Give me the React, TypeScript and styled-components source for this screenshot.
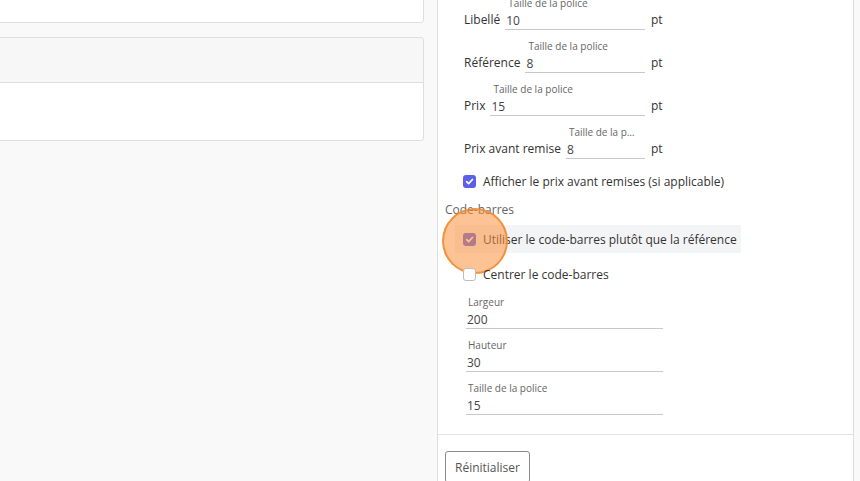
import React, { useState } from "react";
import styled, { createGlobalStyle } from "styled-components";

const GlobalStyle = createGlobalStyle`
  html, body {
    margin: 0;
    padding: 0;
    background: #f9f9f9;
  }
  body {
    font-family: "Open Sans", "Noto Sans", sans-serif;
    color: #333;
    overflow: hidden;
  }
`;

const champsPolice = [
  { libelle: "Libellé", valeur: "10" },
  { libelle: "Référence", valeur: "8" },
  { libelle: "Prix", valeur: "15" },
  { libelle: "Prix avant remise", valeur: "8" },
];

const champsCodeBarres = [
  { libelle: "Largeur", valeur: "200" },
  { libelle: "Hauteur", valeur: "30" },
  { libelle: "Taille de la police", valeur: "15" },
];

const Check = ({ coche }: { coche: boolean }) => (
  <Case $coche={coche}>
    {coche && (
      <svg width="9" height="9" viewBox="0 0 10 10">
        <path d="M1.8 5.2 L4 7.3 L8.3 2.8" fill="none" stroke="#fff" strokeWidth="1.9" strokeLinecap="round" strokeLinejoin="round" />
      </svg>
    )}
  </Case>
);

const App = () => {
  const [prixAvant, setPrixAvant] = useState<boolean>(true);
  const [utiliserCode, setUtiliserCode] = useState<boolean>(true);
  const [centrer, setCentrer] = useState<boolean>(false);

  return (
    <>
      <GlobalStyle />
      <Page>
        <ColonneGauche>
          <Carte $coupee>
            <CorpsCarte $hauteur={22} />
          </Carte>
          <Carte>
            <EnteteCarte />
            <CorpsCarte $hauteur={57} />
          </Carte>
        </ColonneGauche>

        <Panneau>
          <ContenuPanneau>
            {champsPolice.map((c) => (
              <LigneChamp key={c.libelle}>
                <Libelle>{c.libelle}</Libelle>
                <ZoneSaisie>
                  <PetitLibelle>Taille de la police</PetitLibelle>
                  <Saisie defaultValue={c.valeur} />
                </ZoneSaisie>
                <Unite>pt</Unite>
              </LigneChamp>
            ))}

            <LigneCase $espace={8} onClick={() => setPrixAvant(!prixAvant)}>
              <Check coche={prixAvant} />
              <TexteCase>Afficher le prix avant remises (si applicable)</TexteCase>
            </LigneCase>

            <TitreSection>Code-barres</TitreSection>

            <LigneCase $survol onClick={() => setUtiliserCode(!utiliserCode)}>
              <Check coche={utiliserCode} />
              <TexteCase>Utiliser le code-barres plutôt que la référence</TexteCase>
              <IndicateurClic />
            </LigneCase>

            <LigneCase $espace={7} onClick={() => setCentrer(!centrer)}>
              <Check coche={centrer} />
              <TexteCase>Centrer le code-barres</TexteCase>
            </LigneCase>

            <GroupeChamps>
              {champsCodeBarres.map((c) => (
                <ChampEmpile key={c.libelle}>
                  <PetitLibelle $decale>{c.libelle}</PetitLibelle>
                  <Saisie defaultValue={c.valeur} />
                </ChampEmpile>
              ))}
            </GroupeChamps>
          </ContenuPanneau>

          <PiedPanneau>
            <Bouton type="button">Réinitialiser</Bouton>
          </PiedPanneau>
        </Panneau>
        <Gouttiere />
      </Page>
    </>
  );
};

export default App;

const Page = styled.div`
  display: flex;
  height: 481px;
  width: 860px;
  overflow: hidden;
  background: #f9f9f9;
`;

const ColonneGauche = styled.div`
  width: 437px;
  padding-right: 13px;
  box-sizing: border-box;
  display: flex;
  flex-direction: column;
  gap: 14px;
`;

const Carte = styled.div<{ $coupee?: boolean }>`
  background: #fff;
  border: 1px solid #dedede;
  border-left: none;
  border-top: ${(p) => (p.$coupee ? "none" : "1px solid #dedede")};
  border-radius: ${(p) => (p.$coupee ? "0 0 4px 0" : "0 4px 4px 0")};
  overflow: hidden;
`;

const EnteteCarte = styled.div`
  height: 44px;
  background: #f7f7f7;
  border-bottom: 1px solid #dedede;
`;

const CorpsCarte = styled.div<{ $hauteur: number }>`
  height: ${(p) => p.$hauteur}px;
  background: #fff;
`;

const Panneau = styled.div`
  width: 417px;
  box-sizing: border-box;
  background: #fff;
  border-left: 1px solid #dedede;
  border-right: 1px solid #dedede;
  display: flex;
  flex-direction: column;
`;

const Gouttiere = styled.div`
  flex: 1;
  background: #f9f9f9;
`;

const ContenuPanneau = styled.div`
  margin-top: -13px;
  padding: 0 0 19px 7px;
  border-bottom: 1px solid #e2e2e2;
  display: flex;
  flex-direction: column;
  align-items: flex-start;
`;

const LigneChamp = styled.div`
  display: flex;
  align-items: flex-end;
  width: 200px;
  height: 43px;
  margin-left: 19px;
  font-size: 12px;
`;

const Libelle = styled.span`
  line-height: 20px;
  margin-right: 5px;
  white-space: nowrap;
  color: #333;
`;

const ZoneSaisie = styled.div`
  flex: 1;
  min-width: 0;
  display: flex;
  flex-direction: column;
`;

const PetitLibelle = styled.span<{ $decale?: boolean }>`
  font-size: 10px;
  line-height: 14px;
  color: #666;
  padding: ${(p) => (p.$decale ? "0 0 0 2px" : "0 6px 0 3px")};
  white-space: nowrap;
  overflow: hidden;
  text-overflow: ellipsis;
`;

const Saisie = styled.input`
  width: 100%;
  height: 20px;
  box-sizing: border-box;
  border: none;
  border-bottom: 1px solid #c9c9c9;
  padding: 2px 1px 0;
  font-family: inherit;
  font-size: 12px;
  color: #444;
  background: transparent;
  outline: none;
`;

const Unite = styled.span`
  width: 13px;
  margin-left: 6px;
  line-height: 20px;
  color: #333;
`;

const LigneCase = styled.div<{ $survol?: boolean; $espace?: number }>`
  position: relative;
  display: inline-flex;
  align-items: center;
  height: 28px;
  margin-top: ${(p) => p.$espace ?? 0}px;
  margin-left: 10px;
  padding: 0 4px 0 8px;
  background: ${(p) => (p.$survol ? "#f3f4f6" : "transparent")};
  cursor: pointer;
`;

const Case = styled.span<{ $coche: boolean }>`
  width: 13px;
  height: 13px;
  box-sizing: border-box;
  border-radius: 3px;
  display: inline-flex;
  align-items: center;
  justify-content: center;
  background: ${(p) => (p.$coche ? "#5c5fe8" : "#fff")};
  border: ${(p) => (p.$coche ? "none" : "1px solid #bdbdbd")};
  flex-shrink: 0;
`;

const TexteCase = styled.span`
  margin-left: 7px;
  font-size: 12px;
  color: #333;
  white-space: nowrap;
`;

const TitreSection = styled.div`
  height: 30px;
  line-height: 30px;
  font-size: 12px;
  color: #666;
`;

const IndicateurClic = styled.span`
  position: absolute;
  left: -13px;
  top: -17px;
  width: 66px;
  height: 66px;
  box-sizing: border-box;
  border-radius: 50%;
  background: rgba(252, 145, 60, 0.55);
  border: 2px solid rgba(240, 140, 50, 0.9);
  pointer-events: none;
`;

const GroupeChamps = styled.div`
  margin-top: 7px;
  margin-left: 21px;
  width: 197px;
  display: flex;
  flex-direction: column;
  gap: 9px;
`;

const ChampEmpile = styled.div`
  display: flex;
  flex-direction: column;
`;

const PiedPanneau = styled.div`
  padding: 16px 7px;
`;

const Bouton = styled.button`
  height: 32px;
  padding: 0 9px;
  font-family: inherit;
  font-size: 12px;
  color: #555;
  background: #fff;
  border: 1px solid #8a8a8a;
  border-radius: 3px;
  cursor: pointer;
`;
